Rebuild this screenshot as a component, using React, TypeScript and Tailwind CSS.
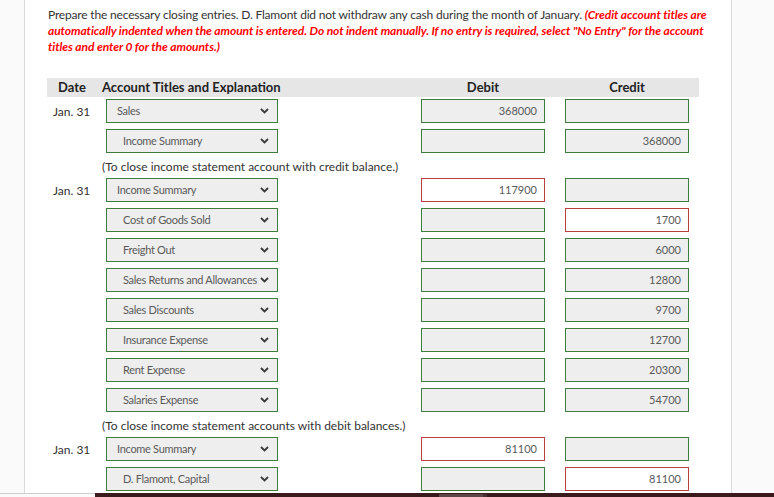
import React from "react";

type Side = "debit" | "credit";
type Row = {
  date?: string;
  account: string;
  side: Side;
  debit?: string;
  credit?: string;
  debitWrong?: boolean;
  creditWrong?: boolean;
};

type Block = { rows: Row[]; note: string };

const blocks: Block[] = [
  {
    rows: [
      { date: "Jan. 31", account: "Sales", side: "debit", debit: "368000" },
      { account: "Income Summary", side: "credit", credit: "368000" },
    ],
    note: "(To close income statement account with credit balance.)",
  },
  {
    rows: [
      { date: "Jan. 31", account: "Income Summary", side: "debit", debit: "117900", debitWrong: true },
      { account: "Cost of Goods Sold", side: "credit", credit: "1700", creditWrong: true },
      { account: "Freight Out", side: "credit", credit: "6000" },
      { account: "Sales Returns and Allowances", side: "credit", credit: "12800" },
      { account: "Sales Discounts", side: "credit", credit: "9700" },
      { account: "Insurance Expense", side: "credit", credit: "12700" },
      { account: "Rent Expense", side: "credit", credit: "20300" },
      { account: "Salaries Expense", side: "credit", credit: "54700" },
    ],
    note: "(To close income statement accounts with debit balances.)",
  },
  {
    rows: [
      { date: "Jan. 31", account: "Income Summary", side: "debit", debit: "81100", debitWrong: true },
      { account: "D. Flamont, Capital", side: "credit", credit: "81100", creditWrong: true },
    ],
    note: "",
  },
];

const Chevron = () => (
  <svg width="9" height="6" viewBox="0 0 9 6" className="shrink-0">
    <polyline points="1,1 4.5,4.5 8,1" fill="none" stroke="#3a3a3a" strokeWidth="1.8" />
  </svg>
);

const AccountSelect = ({ label, side }: { label: string; side: Side }) => (
  <div
    className={`flex h-[24px] w-[172px] items-center justify-between border border-[#3f7d3f] bg-[#eeeeee] pr-[8px] text-[11px] tracking-[-0.3px] text-[#5a5a5a] ${
      side === "credit" ? "pl-[16px]" : "pl-[10px]"
    }`}
  >
    <span className="whitespace-nowrap">{label}</span>
    <Chevron />
  </div>
);

const Amount = ({ value, wrong }: { value?: string; wrong?: boolean }) => (
  <div
    className={`flex h-[24px] w-[124px] items-center justify-end border pr-[7px] text-[11px] text-[#5a5a5a] ${
      wrong ? "border-[#b84040] bg-white" : "border-[#3f7d3f] bg-[#eeeeee]"
    }`}
  >
    {value}
  </div>
);

export default function App() {
  return (
    <div className="flex h-[497px] w-[774px] flex-col overflow-hidden bg-[#fafafa] font-['Lato','Open_Sans',sans-serif]">
      <div className="ml-[24px] w-[708px] flex-1 overflow-hidden border-x border-[#dadada] bg-white">
        <p className="w-[693px] pl-[23px] pt-[7px] text-[12px] leading-[16px] tracking-[-0.18px] text-[#333]">
          Prepare the necessary closing entries. D. Flamont did not withdraw any cash during the month of January.{" "}
          <span className="font-bold italic tracking-[-0.08px] text-[#ff0000]">
            (Credit account titles are automatically indented when the amount is entered. Do not indent manually. If no
            entry is required, select "No Entry" for the account titles and enter 0 for the amounts.)
          </span>
        </p>

        <div className="ml-[22px] mt-[23px] w-[652px]">
          <div className="grid h-[19px] grid-cols-[55px_309px_144px_144px] items-center bg-[#e6e6e6] text-[13px] font-bold text-[#222]">
            <div className="pl-[11px]">Date</div>
            <div>Account Titles and Explanation</div>
            <div className="text-center">Debit</div>
            <div className="text-center">Credit</div>
          </div>

          {blocks.map((block, bi) => (
            <div key={bi}>
              {block.rows.map((row, ri) => (
                <div key={ri} className="grid h-[30px] grid-cols-[55px_309px_144px_144px] items-start pt-[2px]">
                  <div className="pl-[6px] pt-px text-[12px] leading-[24px] text-[#333]">{row.date}</div>
                  <div className="pl-[4px]">
                    <AccountSelect label={row.account} side={row.side} />
                  </div>
                  <div className="flex justify-center">
                    <Amount value={row.debit} wrong={row.debitWrong} />
                  </div>
                  <div className="flex justify-center">
                    <Amount value={row.credit} wrong={row.creditWrong} />
                  </div>
                </div>
              ))}
              {block.note && (
                <div className="h-[19px] whitespace-nowrap pl-[55px] pt-px text-[12px] leading-[17px] text-[#333]">
                  {block.note}
                </div>
              )}
            </div>
          ))}
        </div>
      </div>

      <div className="flex h-[4px] shrink-0">
        <div className="w-[95px] border-t border-[#cfcfcf] bg-[#fafafa]" />
        <div className="flex flex-1 bg-[#3a1a1c] pt-px">
          <div className="w-[344px]" />
          <div className="w-[44px] bg-[#5e4647]" />
          <div className="w-[4px] bg-[#4a3032]" />
        </div>
      </div>
    </div>
  );
}
